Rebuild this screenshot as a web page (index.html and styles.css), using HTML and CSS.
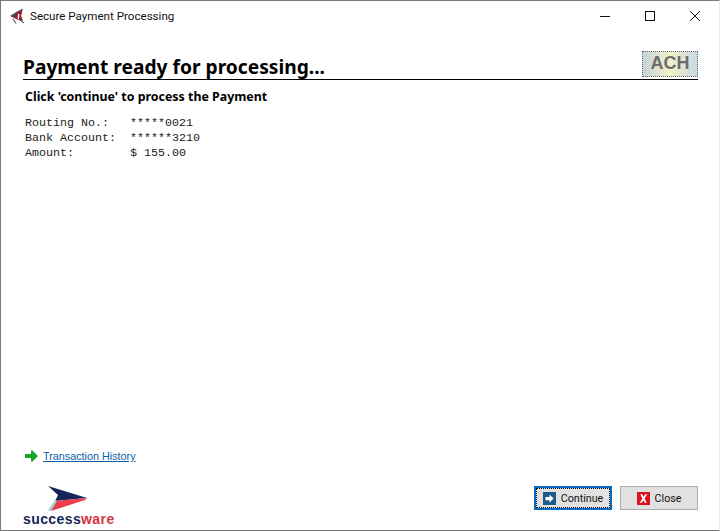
FILE: index.html
```html
<!DOCTYPE html>
<html lang="en">
<head>
    <meta charset="UTF-8">
    <meta name="viewport" content="width=device-width, initial-scale=1.0">
    <title>Secure Payment Processing</title>
    <link rel="stylesheet" href="styles.css">
</head>
<body>
    <div class="window">
        <div class="title-bar">
            <svg class="app-icon" width="16" height="16" viewBox="0 0 16 16">
                <path d="M1 8 L8 3.5 L14 0.5 L12 8 L14 13 L8 11.5 Z" fill="#5a4a58"/>
                <path d="M5.5 8.5 L9 4 L13 3 L12 8 L13.5 12 L8 11 Z" fill="#a3182f"/>
                <path d="M9 6 L10.5 6 L10 11 L8.5 11 Z" fill="#fff"/>
                <path d="M4 11 L7 15.5 M11 12 L15 15" stroke="#333" stroke-width="1" fill="none"/>
            </svg>
            <span class="title-text">Secure Payment Processing</span>
            <div class="window-controls">
                <svg class="control" width="12" height="12" viewBox="0 0 12 12"><path d="M1 6.5 H11" stroke="#111" stroke-width="1"/></svg>
                <svg class="control" width="12" height="12" viewBox="0 0 12 12"><rect x="1.5" y="1.5" width="9" height="9" fill="none" stroke="#111" stroke-width="1"/></svg>
                <svg class="control" width="12" height="12" viewBox="0 0 12 12"><path d="M1 1 L11 11 M11 1 L1 11" stroke="#111" stroke-width="1"/></svg>
            </div>
        </div>

        <div class="content">
            <div class="heading-row">
                <h1 class="heading">Payment ready for processing...</h1>
                <div class="ach-badge">ACH</div>
            </div>
            <p class="subheading">Click 'continue' to process the Payment</p>
            <pre class="details">Routing No.:   *****0021
Bank Account:  ******3210
Amount:        $ 155.00</pre>

            <div class="history">
                <svg width="13" height="12" viewBox="0 0 13 12">
                    <path d="M0 4 H6 V0.5 H7.5 L13 6 L7.5 11.5 H6 V8 H0 Z" fill="#1aa52c"/>
                </svg>
                <a class="history-link" href="#">Transaction History</a>
            </div>

            <div class="footer">
                <div class="logo">
                    <svg class="logo-mark" width="40" height="26" viewBox="0 0 40 26">
                        <path d="M1 0 L40 12 L8 15 L11 9 Z" fill="#16265a"/>
                        <path d="M8 15 L40 12 L38 14 L4 25 Z" fill="#ee3d4e"/>
                        <path d="M1 24 L8 14 L10 15 L4 25 Z" fill="#9fd4d0"/>
                    </svg>
                    <div class="logo-text">success<span class="logo-ware">ware</span></div>
                </div>
                <div class="buttons">
                    <button class="btn btn-default">
                        <span class="btn-inner">
                            <svg width="13" height="13" viewBox="0 0 16 16">
                                <rect width="16" height="16" fill="#1e5a8a"/>
                                <path d="M3 6 H8 V3 L13 8 L8 13 V10 H3 Z" fill="#fff"/>
                            </svg>
                            Continue
                        </span>
                    </button>
                    <button class="btn">
                        <span class="btn-inner">
                            <svg width="13" height="13" viewBox="0 0 14 14">
                                <rect width="14" height="14" fill="#d8161f"/>
                                <path d="M3.5 2.5 L5.5 2.5 L7 5 L9 2.5 L11 2.5 L8.2 7 L10.5 11.5 L8.5 11.5 L7 9 L5 11.5 L3 11.5 L5.8 7 Z" fill="#fff"/>
                            </svg>
                            Close
                        </span>
                    </button>
                </div>
            </div>
        </div>
    </div>
</body>
</html>
```

FILE: styles.css
```css
html, body {
    margin: 0;
    height: 100%;
    background: #fff;
}
.window {
    height: 100vh;
    box-sizing: border-box;
    display: flex;
    flex-direction: column;
    border: 1px solid #7a7a7a;
    border-right-color: #e8e8e8;
    background: #fff;
    font-family: "Roboto", sans-serif;
    color: #000;
}
.title-bar {
    height: 29px;
    display: flex;
    align-items: center;
    padding-left: 8px;
    flex-shrink: 0;
}
.app-icon {
    margin-right: 5px;
}
.title-text {
    font-size: 11.6px;
    color: #111;
}
.window-controls {
    margin-left: auto;
    display: flex;
    gap: 33px;
    padding-right: 18px;
}
.control {
    display: block;
}
.content {
    flex: 1;
    display: flex;
    flex-direction: column;
    padding: 20px 21px 0 22px;
}
.heading-row {
    display: flex;
    justify-content: space-between;
    align-items: flex-end;
    border-bottom: 1px solid #000;
    height: 29px;
}
.heading {
    margin: 0;
    font-family: "Noto Sans", sans-serif;
    font-size: 19.2px;
    line-height: 24px;
    font-weight: bold;
    white-space: nowrap;
}
.ach-badge {
    width: 54px;
    height: 24px;
    margin-bottom: 2px;
    border: 1px dotted #5c6d7e;
    background: linear-gradient(90deg, #c5d2da, #f4f0c8 50%, #c9d8e2);
    font-family: "Liberation Sans", sans-serif;
    font-size: 18px;
    line-height: 23px;
    font-weight: bold;
    color: #6c6d6f;
    text-align: center;
}
.subheading {
    margin: 9px 0 0 2px;
    font-family: "Noto Sans", sans-serif;
    font-size: 12.4px;
    line-height: 16px;
    font-weight: bold;
}
.details {
    margin: 11px 0 0 2px;
    font-family: "Liberation Mono", monospace;
    font-size: 11.67px;
    line-height: 15px;
    color: #222;
}
.history {
    margin-top: auto;
    display: flex;
    align-items: center;
    gap: 5px;
    padding-left: 2px;
}
.history-link {
    font-family: "Liberation Sans", sans-serif;
    font-size: 10.8px;
    line-height: 16px;
    color: #0c5ea8;
}
.footer {
    display: flex;
    justify-content: space-between;
    align-items: flex-end;
    margin-top: 10px;
    height: 56px;
}
.logo {
    display: flex;
    flex-direction: column;
    align-items: flex-start;
    padding-bottom: 3px;
}
.logo-mark {
    margin-left: 24px;
    display: block;
}
.logo-text {
    font-family: "Liberation Sans", sans-serif;
    font-size: 14px;
    line-height: 15px;
    font-weight: bold;
    letter-spacing: 0.4px;
    color: #16265a;
}
.logo-ware {
    color: #d8343f;
}
.buttons {
    display: flex;
    gap: 8px;
    margin-bottom: 20px;
}
.btn {
    width: 78px;
    height: 24px;
    padding: 0;
    box-sizing: border-box;
    border: 1px solid #adadad;
    background: #e1e1e1;
    font-family: "Roboto", sans-serif;
    font-size: 10.7px;
    color: #111;
    display: flex;
    align-items: center;
    justify-content: center;
}
.btn-default {
    border: 2px solid #0a6cc0;
}
.btn-inner {
    display: flex;
    align-items: center;
    justify-content: center;
    gap: 5px;
    width: 100%;
    height: 100%;
    box-sizing: border-box;
    padding-top: 1px;
}
.btn-default .btn-inner {
    outline: 1px dotted #111;
    outline-offset: -1px;
}
```
